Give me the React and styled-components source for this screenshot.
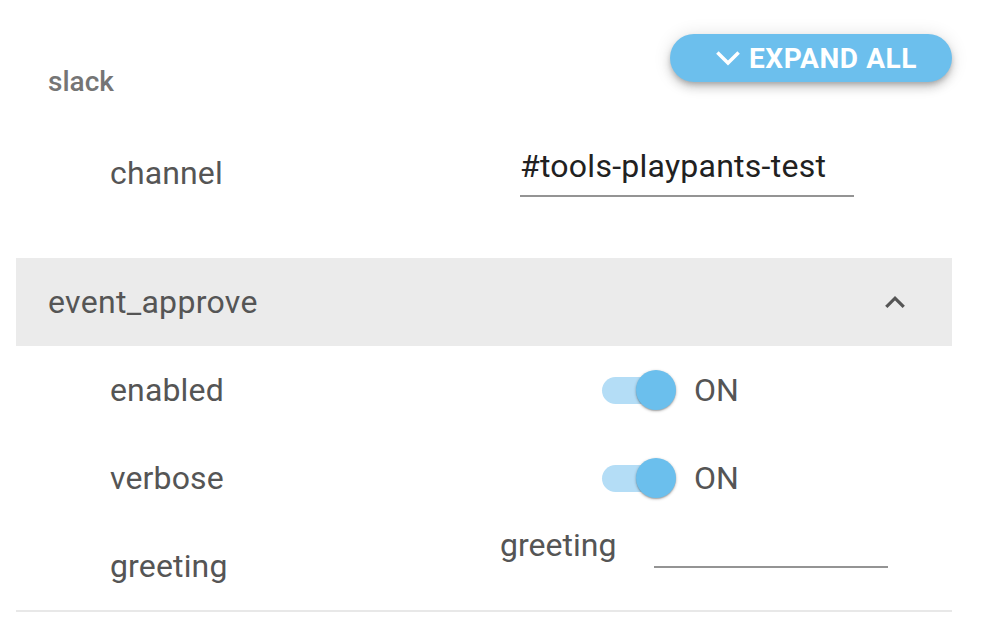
import React from "react";
import styled, { createGlobalStyle } from "styled-components";

const GlobalStyle = createGlobalStyle`
  html, body {
    margin: 0;
    padding: 0;
    background: #ffffff;
  }
  body {
    font-family: Roboto, "Noto Sans", "Liberation Sans", sans-serif;
    -webkit-font-smoothing: antialiased;
  }
`;

const Page = styled.div`
  width: 936px;
  padding: 34px 0 0 16px;
`;

const TopBar = styled.div`
  display: flex;
  justify-content: space-between;
  align-items: flex-start;
  height: 64px;
`;

const GroupTitle = styled.div`
  margin: 32px 0 0 32px;
  font-size: 28px;
  line-height: 32px;
  font-weight: 500;
  color: #757575;
`;

const ExpandButton = styled.button`
  display: flex;
  align-items: center;
  justify-content: center;
  gap: 6px;
  width: 282px;
  height: 48px;
  padding: 0 0 0 8px;
  border: none;
  border-radius: 24px;
  background: #6cbfed;
  color: #ffffff;
  font-family: Roboto, "Liberation Sans", sans-serif;
  font-size: 28px;
  font-weight: 700;
  letter-spacing: 0.6px;
  box-shadow: 0 3px 5px -1px rgba(0, 0, 0, 0.2), 0 6px 10px 0 rgba(0, 0, 0, 0.14),
    0 1px 18px 0 rgba(0, 0, 0, 0.12);
  cursor: pointer;
`;

const Row = styled.div`
  display: grid;
  grid-template-columns: 404px 1fr;
  align-items: ${(p) => (p.$top ? "start" : "center")};
  height: ${(p) => p.$height}px;
  padding-top: ${(p) => p.$padTop || 0}px;
  box-sizing: border-box;
  border-bottom: ${(p) => (p.$divider ? "2px solid #e8e8e8" : "none")};
`;

const Label = styled.div`
  padding: ${(p) => p.$padTop || 0}px 0 0 94px;
  font-size: 32px;
  line-height: 32px;
  letter-spacing: 0.15px;
  color: #555555;
`;

const Value = styled.div`
  display: flex;
  align-items: center;
  padding-left: ${(p) => p.$indent}px;
`;

const TextInput = styled.input`
  width: 334px;
  height: 32px;
  padding: 0 0 13px 0;
  border: none;
  border-bottom: 2px solid #949494;
  outline: none;
  background: transparent;
  font-family: Roboto, "Liberation Sans", sans-serif;
  font-size: 32px;
  letter-spacing: 0.25px;
  color: #212121;
`;

const SectionHeader = styled.div`
  display: flex;
  align-items: center;
  justify-content: space-between;
  height: 88px;
  padding: 0 44px 0 32px;
  background: #ebebeb;
  font-size: 32px;
  letter-spacing: 0.3px;
  color: #555555;
`;

const SwitchWrap = styled.div`
  display: flex;
  align-items: center;
  gap: 24px;
`;

const Track = styled.div`
  position: relative;
  width: 68px;
  height: 27px;
  border-radius: 14px;
  background: #b4ddf6;
`;

const Thumb = styled.div`
  position: absolute;
  top: -7px;
  left: 34px;
  width: 40px;
  height: 40px;
  border-radius: 50%;
  background: #6bbfed;
  box-shadow: 0 1px 3px rgba(0, 0, 0, 0.3), 0 1px 1px rgba(0, 0, 0, 0.14);
`;

const SwitchText = styled.span`
  font-size: 32px;
  color: #555555;
`;

const Field = styled.div`
  display: flex;
  align-items: flex-end;
  gap: 38px;
  margin-bottom: 36px;
`;

const FieldLabel = styled.span`
  font-size: 32px;
  line-height: 32px;
  color: #555555;
  padding-bottom: 7px;
`;

const FieldLine = styled.div`
  width: 234px;
  height: 2px;
  background: #949494;
`;

const Chevron = ({ up, color, size, stroke }) => (
  <svg width={size} height={size} viewBox="0 0 24 24" fill="none">
    <path
      d={up ? "M5 15.5L12 8.5L19 15.5" : "M4.5 8.5L12 16L19.5 8.5"}
      stroke={color}
      strokeWidth={stroke}
      strokeLinecap="square"
    />
  </svg>
);

const Toggle = ({ on }) => (
  <SwitchWrap>
    <Track>
      <Thumb />
    </Track>
    <SwitchText>{on ? "ON" : "OFF"}</SwitchText>
  </SwitchWrap>
);

export default function App() {
  return (
    <Page>
      <GlobalStyle />
      <TopBar>
        <GroupTitle>slack</GroupTitle>
        <ExpandButton>
          <Chevron color="#ffffff" size={30} stroke={2.8} />
          EXPAND ALL
        </ExpandButton>
      </TopBar>

      <Row $height={160} $padTop={52} $top>
        <Label $padTop={7}>channel</Label>
        <Value $indent={100}>
          <TextInput defaultValue="#tools-playpants-test" />
        </Value>
      </Row>

      <SectionHeader>
        event_approve
        <Chevron up color="#555555" size={26} stroke={3} />
      </SectionHeader>

      <Row $height={88}>
        <Label>enabled</Label>
        <Value $indent={182}>
          <Toggle on />
        </Value>
      </Row>
      <Row $height={88}>
        <Label>verbose</Label>
        <Value $indent={182}>
          <Toggle on />
        </Value>
      </Row>
      <Row $height={90} $divider>
        <Label>greeting</Label>
        <Value $indent={80}>
          <Field>
            <FieldLabel>greeting</FieldLabel>
            <FieldLine />
          </Field>
        </Value>
      </Row>
    </Page>
  );
}
